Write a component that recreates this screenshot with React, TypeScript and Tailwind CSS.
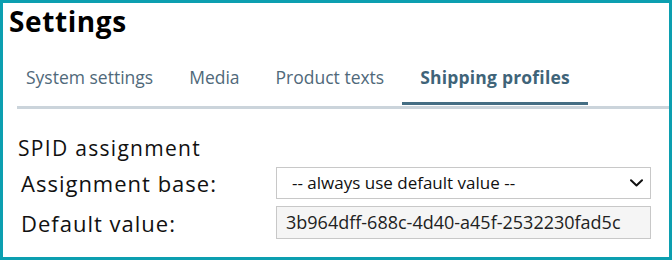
import React from 'react';

const tabs = ['System settings', 'Media', 'Product texts', 'Shipping profiles'];

const Chevron: React.FC = () => (
  <svg width="13" height="8" viewBox="0 0 13 8" fill="none" className="shrink-0">
    <path d="M1 1.2l5.5 5.3 5.5-5.3" stroke="#111" strokeWidth="2" strokeLinecap="round" strokeLinejoin="round" />
  </svg>
);

const App: React.FC = () => {
  const active = 'Shipping profiles';

  return (
    <div className="w-[672px] h-[260px] border-[3px] border-[#0c9fb0] bg-white overflow-hidden font-['Open_Sans',sans-serif]">
      <h1 className="ml-[6px] mt-[4px] text-[28px] font-bold leading-[28px] tracking-[0.6px] text-black">Settings</h1>

      {/* tab bar */}
      <div className="mt-[33px] ml-[5px] flex">
        {tabs.map((tab) => (
          <div
            key={tab}
            className={
              tab === active
                ? 'px-[18px] pb-[16px] border-b-[3px] border-[#456e84] text-[17.5px] leading-[18px] font-bold tracking-[0.2px] text-[#3f6479]'
                : 'px-[18px] pb-[16px] border-b-[3px] border-transparent text-[17.5px] leading-[18px] text-[#50697a]'
            }
          >
            {tab}
          </div>
        ))}
      </div>
      <div className="mt-[1px] ml-[14px] h-[3px] bg-[#cbd4db]" />

      {/* SPID assignment */}
      <div className="mt-[27px] ml-[15px] text-[21px] leading-[24px] tracking-[1.3px] text-[#111]">SPID assignment</div>
      <div className="mt-[7px] ml-[18px] mr-[18px] flex flex-col gap-[7px]">
        <div className="flex items-center">
          <span className="w-[255px] text-[22px] leading-[26px] tracking-[1px] text-[#111]">Assignment base:</span>
          <div className="flex h-[32px] flex-1 items-center justify-between border border-[#c8c8c8] bg-white pl-[15px] pr-[7px]">
            <span className="text-[17px] text-[#111]">-- always use default value --</span>
            <Chevron />
          </div>
        </div>
        <div className="flex items-center">
          <span className="w-[255px] text-[22px] leading-[26px] tracking-[1px] text-[#111]">Default value:</span>
          <div className="flex h-[33px] flex-1 items-center border border-[#c8c8c8] bg-[#f5f5f5] pl-[9px]">
            <span className="text-[18px] text-[#222]">3b964dff-688c-4d40-a45f-2532230fad5c</span>
          </div>
        </div>
      </div>
    </div>
  );
};

export default App;
